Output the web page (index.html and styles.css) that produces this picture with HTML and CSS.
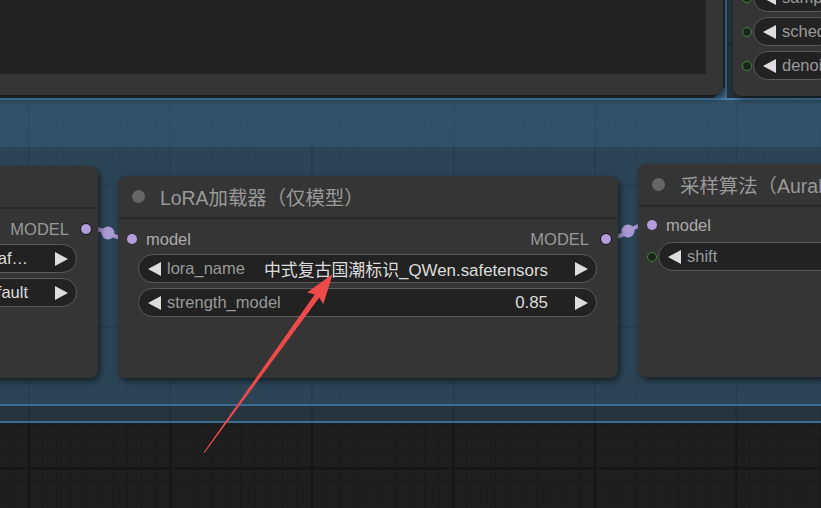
FILE: index.html
```html
<!DOCTYPE html>
<html lang="zh-CN">
<head>
    <meta charset="UTF-8">
    <title>ComfyUI</title>
    <link rel="stylesheet" href="styles.css">
</head>
<body>
<div class="graph">
    <!-- groups -->
    <div class="group group-outer"></div>
    <div class="group group-upper"><span class="group-handle"></span></div>
    <div class="group group-inner"><div class="group-title"></div></div>

    <!-- links run under the nodes -->
    <svg class="links" width="821" height="508" viewBox="0 0 821 508">
        <path d="M86 228 C110 228 108 239 132 239"/>
        <circle cx="108" cy="233" r="6.5"/>
        <path d="M606 238 C630 238 628 224 652 224"/>
        <circle cx="628" cy="231" r="6.5"/>
    </svg>

    <div class="node node-preview">
        <div class="preview-area"></div>
    </div>

    <div class="node node-sampler">
        <div class="widget"><i class="w-input"></i><span class="arr-l"></span><span class="w-label">sampler_name</span></div>
        <div class="widget"><i class="w-input"></i><span class="arr-l"></span><span class="w-label">scheduler</span></div>
        <div class="widget"><i class="w-input"></i><span class="arr-l"></span><span class="w-label">denoise</span></div>
    </div>

    <div class="node node-unet">
        <div class="node-title"><span class="title-dot"></span>加载扩散模型</div>
        <div class="node-body">
            <div class="slots">
                <span></span>
                <span class="slot-out">MODEL<i class="dot"></i></span>
            </div>
            <div class="widget"><span class="arr-l"></span><span class="w-label">unet_name</span><span class="w-value">qwen_image_fp8_e4m3fn.saf…</span><span class="arr-r"></span></div>
            <div class="widget"><span class="arr-l"></span><span class="w-label">weight_dtype</span><span class="w-value">default</span><span class="arr-r"></span></div>
        </div>
    </div>

    <div class="node node-lora">
        <div class="node-title"><span class="title-dot"></span>LoRA加载器（仅模型）</div>
        <div class="node-body">
            <div class="slots">
                <span class="slot-in"><i class="dot"></i>model</span>
                <span class="slot-out">MODEL<i class="dot"></i></span>
            </div>
            <div class="widget"><span class="arr-l"></span><span class="w-label">lora_name</span><span class="w-value">中式复古国潮标识_QWen.safetensors</span><span class="arr-r"></span></div>
            <div class="widget"><span class="arr-l"></span><span class="w-label">strength_model</span><span class="w-value">0.85</span><span class="arr-r"></span></div>
        </div>
    </div>

    <div class="node node-aura">
        <div class="node-title"><span class="title-dot"></span>采样算法（AuraFlow）</div>
        <div class="node-body">
            <div class="slots">
                <span class="slot-in"><i class="dot"></i>model</span>
            </div>
            <div class="widget"><i class="w-input"></i><span class="arr-l"></span><span class="w-label">shift</span><span class="w-value">3.10</span><span class="arr-r"></span></div>
        </div>
    </div>

    <!-- annotation arrow -->
    <svg class="annotation" width="821" height="508" viewBox="0 0 821 508">
        <polygon points="203.6,452.4 314.7,294.4 307.1,292.5 332.7,274 323.3,304.2 319.3,297.6 204.4,453"/>
    </svg>
</div>
</body>
</html>
```

FILE: styles.css
```css
body {
    margin: 0;
    background: #1e1e1e;
    font-family: "Liberation Sans", "Noto Sans CJK SC", sans-serif;
    overflow: hidden;
}

.graph {
    position: relative;
    width: 821px;
    height: 508px;
    overflow: hidden;
    background-color: #1e1e1e;
    background-image:
            linear-gradient(90deg, #151515 2px, transparent 2px),
            linear-gradient(#151515 2px, transparent 2px),
            linear-gradient(90deg, #191919 1px, transparent 1px),
            linear-gradient(#191919 1px, transparent 1px);
    background-size: 141.5px 141.5px, 141.5px 141.5px, 14.15px 14.15px, 14.15px 14.15px;
    background-position: 28px 43px;
}

/* groups: translucent blue, stacked */
.group {
    position: absolute;
    box-sizing: border-box;
}

.group-outer {
    left: -10px;
    top: -20px;
    width: 841px;
    height: 443px;
    background: rgba(63, 120, 158, .25);
    border-bottom: 2px solid #3c6d91;
}

.group-upper {
    left: -10px;
    top: -20px;
    width: 737px;
    height: 120px;
    border-right: 2px solid #3f74a0;
}

.group-handle {
    position: absolute;
    right: 0;
    bottom: 0;
    width: 0;
    height: 0;
    border-left: 13px solid transparent;
    border-bottom: 13px solid rgba(70, 130, 175, .7);
}

.group-inner {
    left: -10px;
    top: 98px;
    width: 841px;
    height: 308px;
    background: rgba(63, 120, 158, .25);
    border-top: 2px solid #4a80aa;
    border-bottom: 2px solid #3c6d91;
}

.group-title {
    height: 47px;
    background: rgba(63, 120, 158, .25);
}

/* links */
.links {
    position: absolute;
    left: 0;
    top: 0;
}

.links path {
    fill: none;
    stroke: #a999d4;
    stroke-width: 4;
}

.links circle {
    fill: #a999d4;
}

/* nodes */
.node {
    position: absolute;
    box-sizing: border-box;
    background: #353535;
    border-radius: 8px;
    box-shadow: 2px 3px 6px rgba(0, 0, 0, .55);
    color: #999;
    font-size: 16.5px;
}

.node-title {
    height: 41px;
    display: flex;
    align-items: center;
    padding-left: 14px;
    font-size: 19.4px;
    color: #999;
    white-space: nowrap;
    border-bottom: 2px solid #2a2a2a;
}

.title-dot {
    flex: none;
    width: 13px;
    height: 13px;
    border-radius: 50%;
    background: #666;
    margin-right: 15px;
}

.node-body {
    padding-top: 7px;
}

.slots {
    height: 26px;
    display: flex;
    align-items: center;
    justify-content: space-between;
    margin-bottom: 2px;
}

.slot-in {
    display: flex;
    align-items: center;
    gap: 9px;
    padding-left: 9px;
    color: #aaa;
}

.slot-out {
    display: flex;
    align-items: center;
    gap: 11px;
    padding-right: 6px;
}

.dot {
    width: 10px;
    height: 10px;
    border-radius: 50%;
    background: #b39ddb;
}

.slot-out .dot {
    box-sizing: border-box;
    width: 12px;
    height: 12px;
    border: 1.5px solid #111;
}

/* combo / number widgets */
.widget {
    position: relative;
    box-sizing: border-box;
    height: 29px;
    margin: 0 21px 5px 20px;
    padding: 0 8px 0 9px;
    display: flex;
    align-items: center;
    background: #222;
    border: 1px solid #5a5a5a;
    border-radius: 15px;
}

.arr-l {
    flex: none;
    border-top: 7px solid transparent;
    border-bottom: 7px solid transparent;
    border-right: 13px solid #ddd;
    margin-right: 6px;
}

.arr-r {
    flex: none;
    border-top: 7px solid transparent;
    border-bottom: 7px solid transparent;
    border-left: 13px solid #ddd;
    margin-left: 27px;
}

.w-label {
    color: #999;
    white-space: nowrap;
}

.w-value {
    margin-left: auto;
    padding-left: 12px;
    color: #ddd;
    white-space: nowrap;
}

.node-lora .w-value {
    font-size: 16.9px;
}

.w-input {
    position: absolute;
    left: -12px;
    top: 9px;
    box-sizing: border-box;
    width: 10px;
    height: 10px;
    border-radius: 50%;
    border: 1.5px solid #3b8a3b;
    background: #1b261b;
}

/* individual nodes */
.node-preview {
    left: -20px;
    top: -40px;
    width: 743px;
    height: 135px;
    display: flex;
    flex-direction: column;
}

.preview-area {
    flex: 1;
    margin: 0 17px 21px 0;
    background: #232323;
}

.node-sampler {
    left: 733px;
    top: -40px;
    width: 120px;
    height: 136px;
    padding-top: 23px;
}

.node-unet {
    left: -520px;
    top: 166px;
    width: 618px;
    height: 212px;
}

.node-lora {
    left: 118px;
    top: 176px;
    width: 500px;
    height: 202px;
}

.node-aura {
    left: 638px;
    top: 164px;
    width: 300px;
    height: 213px;
}

.node-aura .node-body {
    padding-top: 5px;
}

.node-aura .slots {
    margin-bottom: 4px;
}

.annotation {
    position: absolute;
    left: 0;
    top: 0;
}

.annotation polygon {
    fill: #ef4a4a;
}
```
